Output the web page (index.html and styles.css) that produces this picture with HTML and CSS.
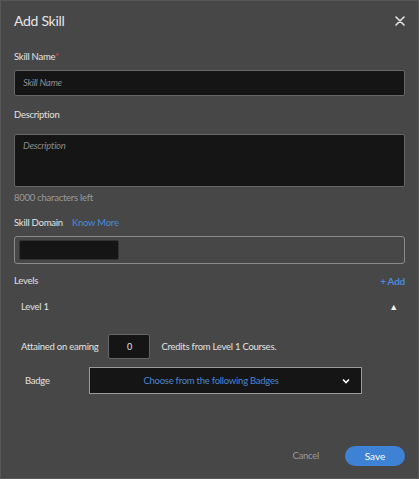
FILE: index.html
```html
<!DOCTYPE html>
<html lang="en">
<head>
  <meta charset="UTF-8">
  <title>Add Skill</title>
  <link rel="stylesheet" href="styles.css">
</head>
<body>
  <div class="dialog">
    <div class="header">
      <h2 class="title">Add Skill</h2>
      <svg class="close" width="10" height="10" viewBox="0 0 10 10">
        <path d="M1 1L9 9M9 1L1 9" stroke="#e6e6e6" stroke-width="1.6" stroke-linecap="round"/>
      </svg>
    </div>

    <div class="label label-name">Skill Name<span class="req">*</span></div>
    <div class="input name-input">Skill Name</div>

    <div class="label label-desc">Description</div>
    <div class="input textarea">Description</div>
    <div class="counter">8000 characters left</div>

    <div class="label label-domain">Skill Domain <span class="link">Know More</span></div>
    <div class="domain-box">
      <div class="domain-chip"></div>
    </div>

    <div class="levels-head">
      <span class="label">Levels</span>
      <span class="add">+ Add</span>
    </div>

    <div class="level-head">
      <span>Level 1</span>
      <span class="caret">&#9650;</span>
    </div>

    <div class="credit-row">
      <span>Attained on earning</span>
      <div class="credit-input">0</div>
      <span>Credits from Level 1 Courses.</span>
    </div>

    <div class="badge-row">
      <span class="badge-label">Badge</span>
      <div class="select">
        <span class="select-text">Choose from the following Badges</span>
        <svg class="chevron" width="8" height="6" viewBox="0 0 8 6">
          <path d="M1 1.5L4 4.5L7 1.5" stroke="#ffffff" stroke-width="1.6" fill="none"/>
        </svg>
      </div>
    </div>

    <div class="footer">
      <span class="cancel">Cancel</span>
      <button class="save">Save</button>
    </div>
  </div>
</body>
</html>
```

FILE: styles.css
```css
body {
  margin: 0;
  font-family: Lato, "Open Sans", sans-serif;
  background: #474747;
}
.dialog {
  height: 479px;
  box-sizing: border-box;
  border: 1px solid #575757;
  background: #474747;
  padding: 0 13px;
  display: flex;
  flex-direction: column;
  color: #e2e2e2;
  font-size: 9.5px;
  line-height: 14px;
  letter-spacing: -0.25px;
}
.header {
  height: 39px;
  display: flex;
  align-items: center;
  justify-content: space-between;
}
.title {
  margin: 0;
  font-size: 14px;
  line-height: 18px;
  font-weight: 400;
  letter-spacing: -0.3px;
  color: #e6e6e6;
}
.label {
  color: #e2e2e2;
}
.req {
  color: #e0403a;
}
.label-name {
  margin-top: 10px;
}
.input {
  background: #151515;
  border: 1px solid #666;
  border-radius: 2px;
  color: #8c8c8c;
  font-style: italic;
  padding: 0 8px;
}
.name-input {
  margin-top: 6px;
  height: 24px;
  line-height: 24px;
}
.label-desc {
  margin-top: 12px;
}
.textarea {
  margin-top: 12px;
  padding-top: 4px;
  box-sizing: border-box;
  height: 53px;
}
.counter {
  margin-top: 4px;
  color: #9a9a9a;
}
.label-domain {
  margin-top: 11px;
}
.link {
  color: #4a8ad8;
  margin-left: 7px;
}
.domain-box {
  margin-top: 6px;
  height: 28px;
  box-sizing: border-box;
  border: 1px solid #8a8a8a;
  border-radius: 3px;
  padding: 3px 4px;
}
.domain-chip {
  width: 100px;
  height: 20px;
  box-sizing: border-box;
  background: #151515;
  border: 1px solid #333;
  border-radius: 2px;
}
.levels-head {
  margin-top: 10px;
  display: flex;
  justify-content: space-between;
  align-items: center;
}
.add {
  color: #4a8ad8;
  font-weight: 700;
  font-size: 10px;
}
.level-head {
  margin-top: 12px;
  padding: 0 7px;
  display: flex;
  justify-content: space-between;
  align-items: center;
}
.caret {
  font-size: 9px;
  color: #f0f0f0;
}
.credit-row {
  margin-top: 20px;
  padding-left: 7px;
  display: flex;
  align-items: center;
}
.credit-input {
  width: 42px;
  height: 25px;
  box-sizing: border-box;
  margin: 0 11px 0 10px;
  background: #151515;
  border: 1px solid #666;
  border-radius: 2px;
  text-align: center;
  line-height: 23px;
  font-size: 9px;
}
.badge-row {
  margin-top: 8px;
  display: flex;
  align-items: center;
  padding-left: 11px;
}
.badge-label {
  width: 64px;
}
.select {
  width: 273px;
  height: 27px;
  box-sizing: border-box;
  background: #151515;
  border: 1.5px solid #9a9a9a;
  display: flex;
  align-items: center;
}
.select-text {
  flex: 1;
  text-align: center;
  color: #4a86d4;
  padding-right: 10px;
}
.chevron {
  margin-right: 11px;
}
.footer {
  margin-top: auto;
  padding-bottom: 12px;
  display: flex;
  justify-content: flex-end;
  align-items: center;
}
.cancel {
  color: #9a9a9a;
  margin-right: 26px;
}
.save {
  width: 60px;
  height: 20px;
  border: none;
  border-radius: 10px;
  background: #3e82d6;
  color: #fff;
  font-family: inherit;
  font-size: 10px;
  padding: 0;
}
```
